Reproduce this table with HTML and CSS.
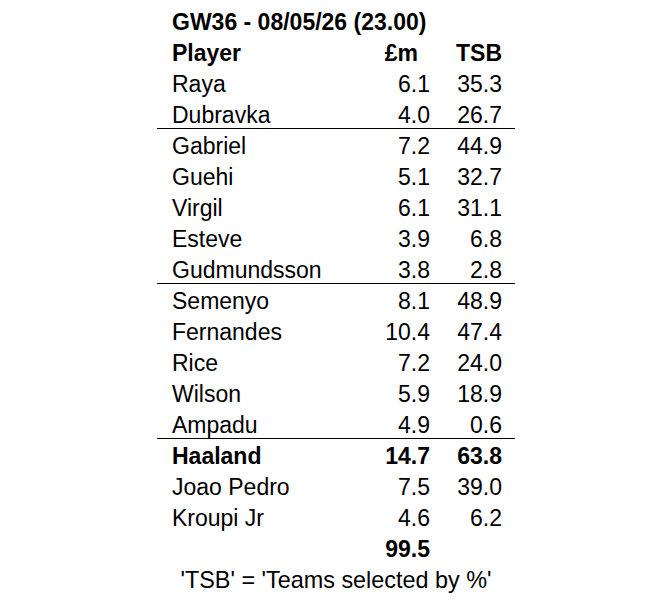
FILE: index.html
```html
<!DOCTYPE html>
<html lang="en">
<head>
<meta charset="utf-8">
<title>GW36 - 08/05/26</title>
<link rel="stylesheet" href="styles.css">
</head>
<body>
<div class="sheet">
  <div class="row title"><span class="name">GW36 - 08/05/26 (23.00)</span></div>
  <div class="row bold"><span class="name">Player</span><span class="num head-price">£m</span><span class="num">TSB</span></div>
  <div class="row"><span class="name">Raya</span><span class="num">6.1</span><span class="num">35.3</span></div>
  <div class="row sep"><span class="name">Dubravka</span><span class="num">4.0</span><span class="num">26.7</span></div>
  <div class="row"><span class="name">Gabriel</span><span class="num">7.2</span><span class="num">44.9</span></div>
  <div class="row"><span class="name">Guehi</span><span class="num">5.1</span><span class="num">32.7</span></div>
  <div class="row"><span class="name">Virgil</span><span class="num">6.1</span><span class="num">31.1</span></div>
  <div class="row"><span class="name">Esteve</span><span class="num">3.9</span><span class="num">6.8</span></div>
  <div class="row sep"><span class="name">Gudmundsson</span><span class="num">3.8</span><span class="num">2.8</span></div>
  <div class="row"><span class="name">Semenyo</span><span class="num">8.1</span><span class="num">48.9</span></div>
  <div class="row"><span class="name">Fernandes</span><span class="num">10.4</span><span class="num">47.4</span></div>
  <div class="row"><span class="name">Rice</span><span class="num">7.2</span><span class="num">24.0</span></div>
  <div class="row"><span class="name">Wilson</span><span class="num">5.9</span><span class="num">18.9</span></div>
  <div class="row sep"><span class="name">Ampadu</span><span class="num">4.9</span><span class="num">0.6</span></div>
  <div class="row bold"><span class="name">Haaland</span><span class="num">14.7</span><span class="num">63.8</span></div>
  <div class="row"><span class="name">Joao Pedro</span><span class="num">7.5</span><span class="num">39.0</span></div>
  <div class="row"><span class="name">Kroupi Jr</span><span class="num">4.6</span><span class="num">6.2</span></div>
  <div class="row bold"><span class="name"></span><span class="num">99.5</span><span class="num"></span></div>
  <div class="row footer"><span class="note">'TSB' = 'Teams selected by %'</span></div>
</div>
</body>
</html>
```

FILE: styles.css
```css
html, body {
  margin: 0;
  padding: 0;
  background: #ffffff;
}

body {
  font-family: "Liberation Sans", Arial, sans-serif;
  font-size: 23px;
  color: #000000;
}

.sheet {
  width: 358px;
  margin: 0 auto;
  padding-top: 5px;
}

.row {
  display: grid;
  grid-template-columns: 1fr 60px 72px;
  box-sizing: border-box;
  height: 31px;
  padding: 5px 13px 0 15px;
  line-height: 25px;
  border-bottom: 1px solid transparent;
  white-space: nowrap;
}

.row.sep {
  border-bottom-color: #000000;
}

.bold,
.title {
  font-weight: bold;
}

.num {
  text-align: right;
}

.head-price {
  padding-right: 12px;
}

.footer {
  display: flex;
  justify-content: center;
  padding-left: 0;
  padding-right: 0;
}

.note {
  font-size: 23.4px;
}
```
